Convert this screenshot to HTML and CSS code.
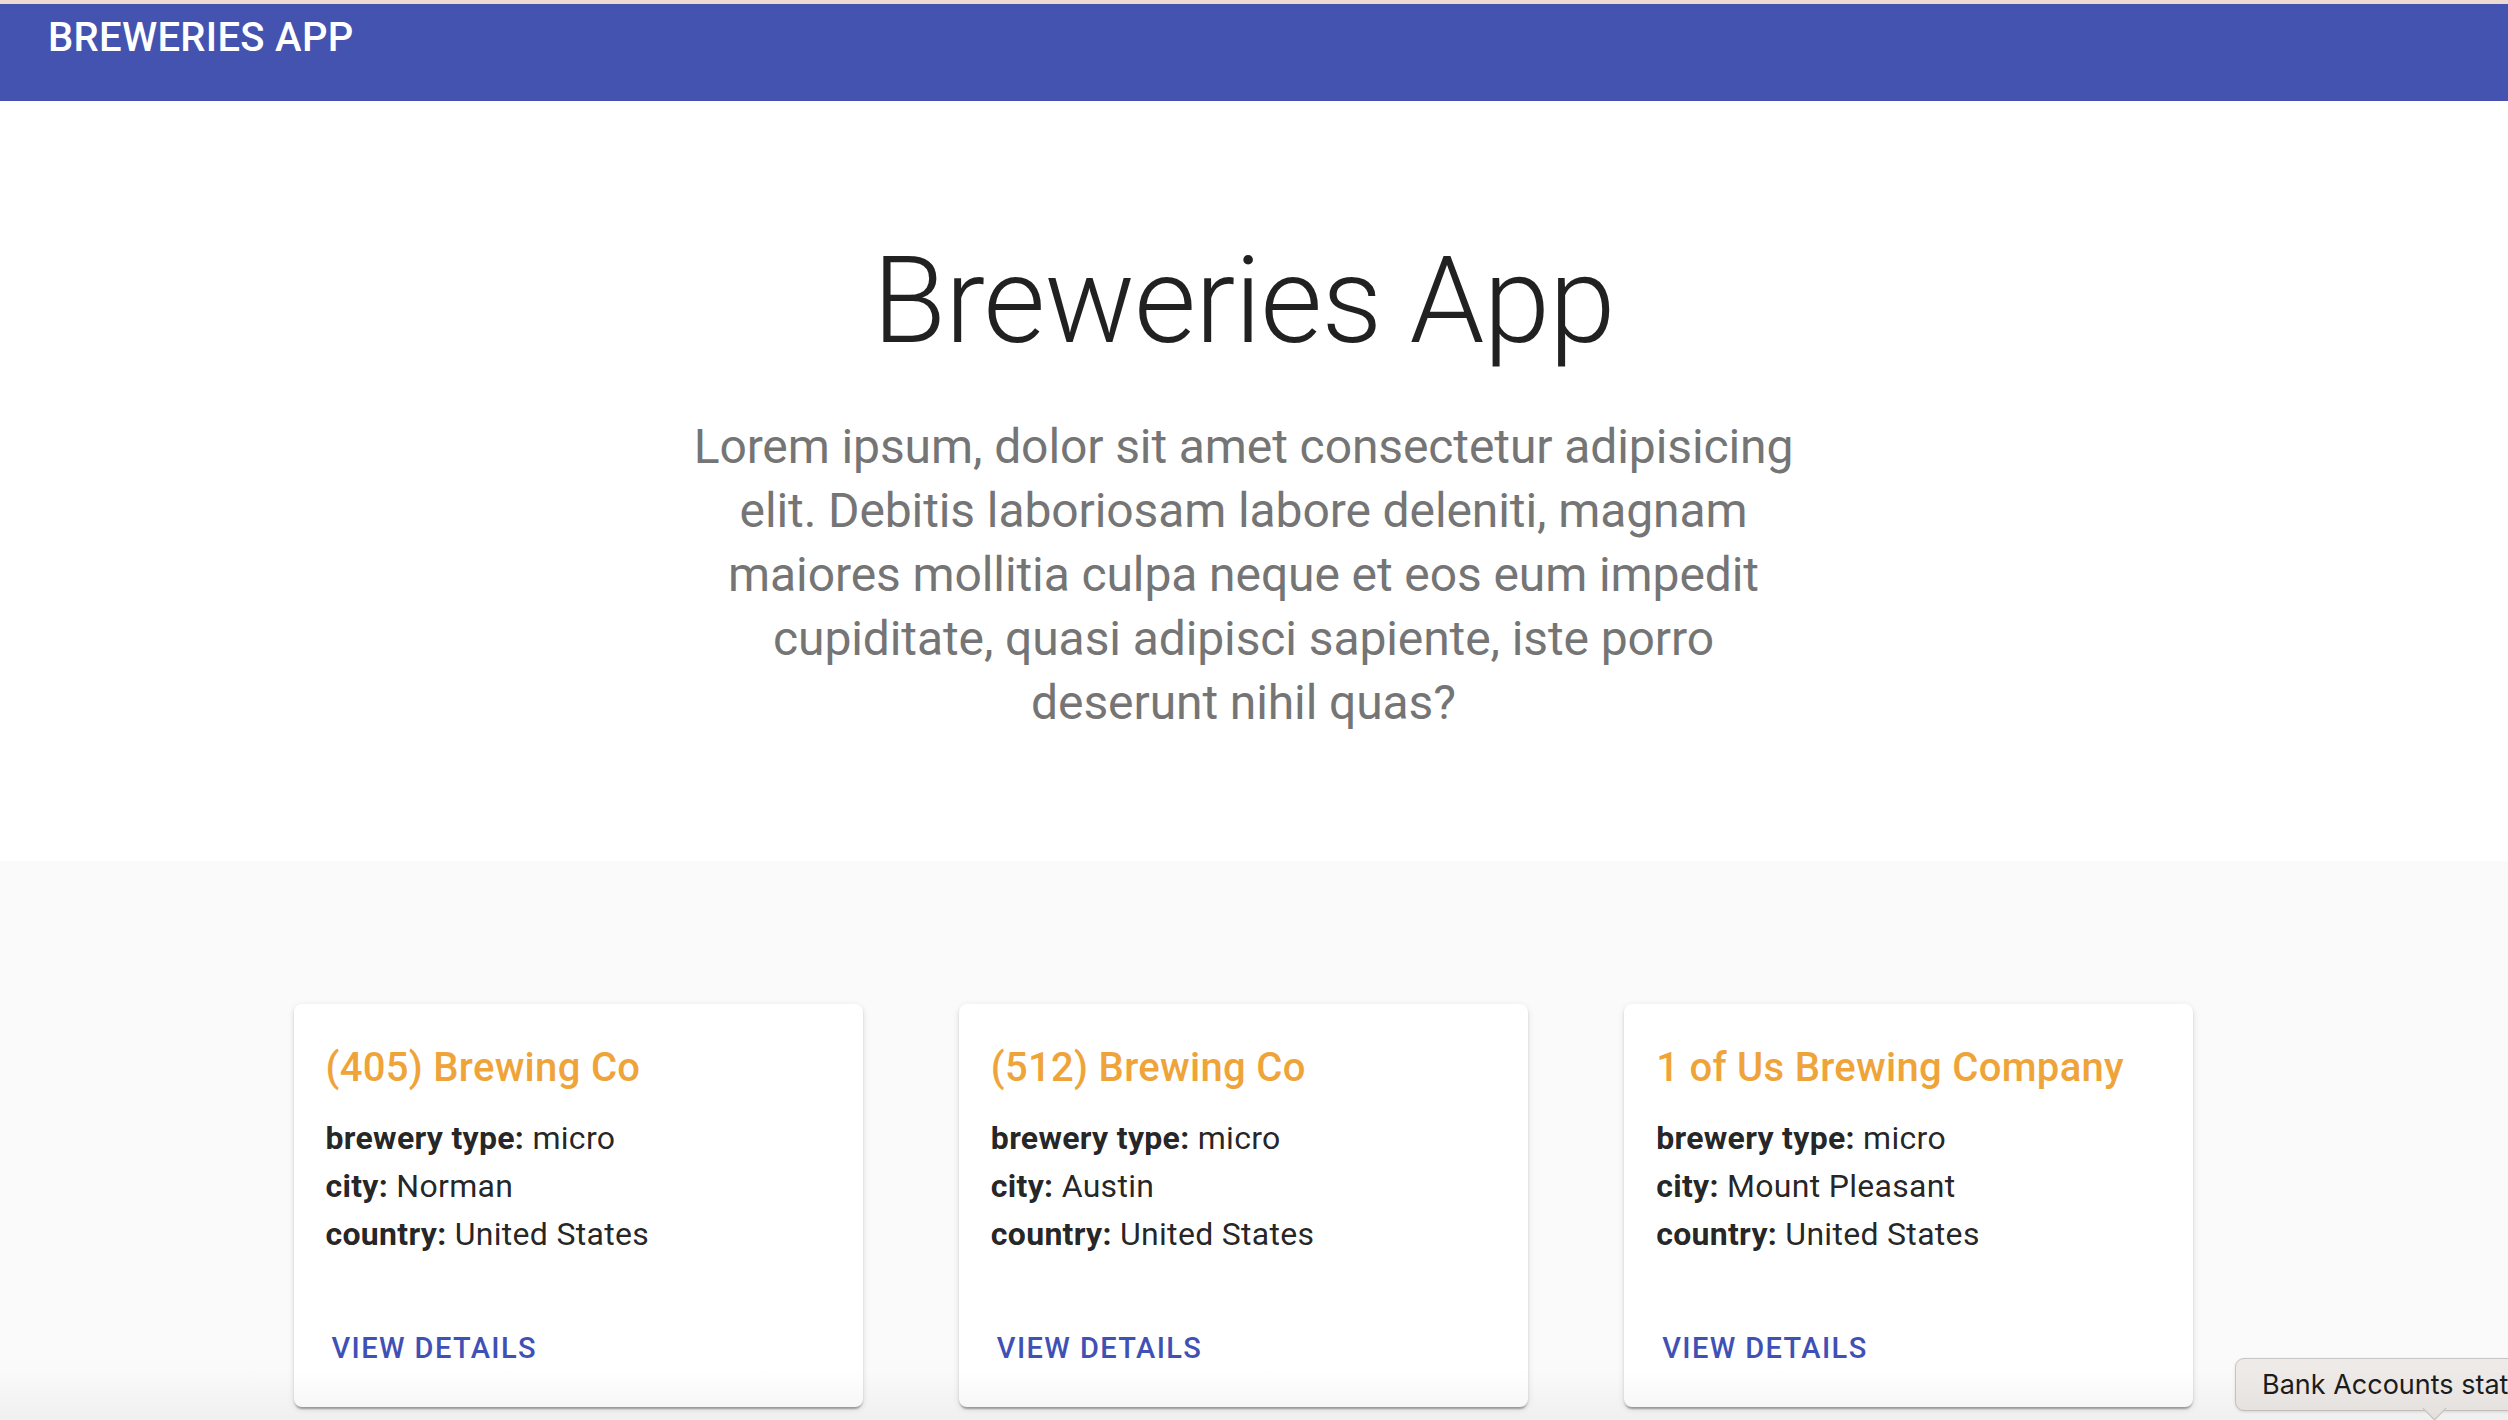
FILE: index.html
```html
<!DOCTYPE html>
<html lang="en">
<head>
<meta charset="utf-8">
<title>Breweries App</title>
<link rel="stylesheet" href="styles.css">
</head>
<body>
<header class="appbar">
  <div class="appbar-title">BREWERIES APP</div>
</header>
<main>
  <section class="hero">
    <div class="hero-inner">
      <h1 class="hero-title">Breweries App</h1>
      <p class="hero-text">Lorem ipsum, dolor sit amet consectetur adipisicing elit. Debitis laboriosam labore deleniti, magnam maiores mollitia culpa neque et eos eum impedit cupiditate, quasi adipisci sapiente, iste porro deserunt nihil quas?</p>
    </div>
  </section>
  <section class="cards-section">
    <div class="card-grid">
      <article class="card">
        <div class="card-content">
          <h2 class="card-title">(405) Brewing Co</h2>
          <div class="card-line"><strong>brewery type:</strong> micro</div>
          <div class="card-line"><strong>city:</strong> Norman</div>
          <div class="card-line"><strong>country:</strong> United States</div>
        </div>
        <div class="card-actions"><button class="btn">View Details</button></div>
      </article>
      <article class="card">
        <div class="card-content">
          <h2 class="card-title">(512) Brewing Co</h2>
          <div class="card-line"><strong>brewery type:</strong> micro</div>
          <div class="card-line"><strong>city:</strong> Austin</div>
          <div class="card-line"><strong>country:</strong> United States</div>
        </div>
        <div class="card-actions"><button class="btn">View Details</button></div>
      </article>
      <article class="card">
        <div class="card-content">
          <h2 class="card-title">1 of Us Brewing Company</h2>
          <div class="card-line"><strong>brewery type:</strong> micro</div>
          <div class="card-line"><strong>city:</strong> Mount Pleasant</div>
          <div class="card-line"><strong>country:</strong> United States</div>
        </div>
        <div class="card-actions"><button class="btn">View Details</button></div>
      </article>
    </div>
  </section>
</main>
<div class="tooltip"><span class="tooltip-text">Bank Accounts stat</span><span class="tooltip-arrow"></span></div>
<div class="bottom-fade"></div>
</body>
</html>
```
FILE: styles.css
```css
html, body {
  margin: 0;
  padding: 0;
  overflow: hidden;
}

body {
  font-family: Roboto, "Noto Sans", "Liberation Sans", sans-serif;
  background: #fafafa;
  color: rgba(0, 0, 0, 0.87);
  width: 2508px;
  height: 1420px;
  position: relative;
}

.appbar {
  background: #4452b0;
  border-top: 4px solid #ecdad2;
  padding: 2px 0 31px 48px;
}

.appbar-title {
  color: #ffffff;
  font-size: 40px;
  font-weight: 500;
  line-height: 64px;
  letter-spacing: 0.3px;
}

.hero {
  background: #ffffff;
  padding: 128px 21px 126px 0;
}

.hero-inner {
  max-width: 1104px;
  margin: 0 auto;
  text-align: center;
}

.hero-title {
  margin: 0 0 42px;
  font-size: 120px;
  font-weight: 300;
  line-height: 144px;
  letter-spacing: -1px;
  color: rgba(0, 0, 0, 0.87);
}

.hero-text {
  margin: 0 -6px;
  font-size: 48px;
  font-weight: 400;
  line-height: 64px;
  letter-spacing: -0.1px;
  color: #757575;
}

.cards-section {
  padding: 143px 21px 10px 0;
}

.card-grid {
  width: 1900px;
  margin: 0 auto;
  display: grid;
  grid-template-columns: repeat(3, 1fr);
  column-gap: 96px;
}

.card {
  background: #ffffff;
  border-radius: 8px;
  height: 403px;
  display: flex;
  flex-direction: column;
  box-shadow: 0 4px 2px -2px rgba(0, 0, 0, 0.2), 0 2px 2px 0 rgba(0, 0, 0, 0.14), 0 2px 6px 0 rgba(0, 0, 0, 0.12);
}

.card-content {
  padding: 32px 32px 0;
}

.card-title {
  margin: 0 0 14px;
  font-size: 40px;
  font-weight: 500;
  line-height: 64px;
  letter-spacing: 0.3px;
  color: #efa43a;
}

.card-line {
  font-size: 32px;
  line-height: 48px;
  letter-spacing: 0.3px;
  color: rgba(0, 0, 0, 0.87);
}

.card-line strong {
  font-weight: 700;
}

.card-actions {
  margin-top: auto;
  padding: 16px 16px 22px;
}

.btn {
  border: 0;
  background: transparent;
  font-family: Roboto, "Noto Sans", "Liberation Sans", sans-serif;
  font-size: 29px;
  font-weight: 500;
  line-height: 49px;
  letter-spacing: 1.4px;
  text-transform: uppercase;
  color: #3f51b5;
  padding: 12px 22px;
  border-radius: 8px;
  cursor: pointer;
}

.tooltip {
  position: absolute;
  left: 2235px;
  top: 1358px;
  width: 320px;
  height: 51px;
  background: #eeeae7;
  border: 1px solid #c8c5c2;
  border-radius: 9px;
  box-shadow: 0 1px 3px rgba(0, 0, 0, 0.12);
  font-family: Inter, "Liberation Sans", sans-serif;
  font-size: 27px;
  line-height: 51px;
  color: #1c1c1c;
  padding-left: 26px;
  white-space: nowrap;
}

.tooltip-arrow {
  position: absolute;
  left: 190px;
  top: 41px;
  width: 16px;
  height: 16px;
  background: #eeeae7;
  border-right: 1px solid #c8c5c2;
  border-bottom: 1px solid #c8c5c2;
  transform: rotate(45deg);
}

.bottom-fade {
  position: absolute;
  left: 0;
  right: 0;
  bottom: 0;
  height: 50px;
  background: linear-gradient(to bottom, rgba(0, 0, 0, 0), rgba(0, 0, 0, 0.045));
  pointer-events: none;
}
```
